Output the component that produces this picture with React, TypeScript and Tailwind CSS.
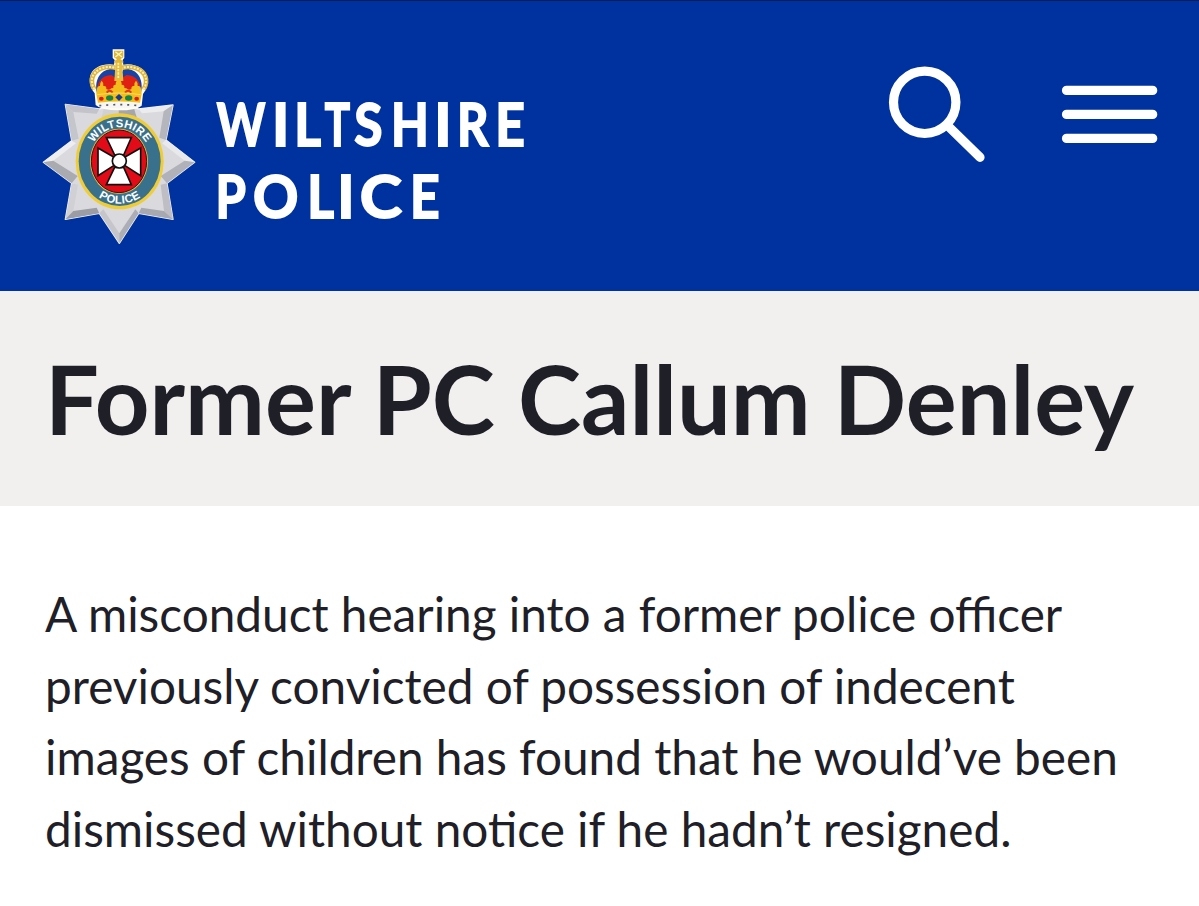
import React from 'react';

type Letter = { char: string; x: number; scale: number };

const wiltshire: Letter[] = [
  { char: 'W', x: 11.8, scale: 0.79 },
  { char: 'I', x: 67, scale: 1 },
  { char: 'L', x: 89.3, scale: 0.88 },
  { char: 'T', x: 119.7, scale: 0.72 },
  { char: 'S', x: 149.3, scale: 0.88 },
  { char: 'H', x: 186, scale: 0.84 },
  { char: 'I', x: 229.2, scale: 1 },
  { char: 'R', x: 252, scale: 0.84 },
  { char: 'E', x: 290.3, scale: 0.88 },
];

const police: Letter[] = [
  { char: 'P', x: 10.6, scale: 0.84 },
  { char: 'O', x: 47.9, scale: 0.96 },
  { char: 'L', x: 102.3, scale: 0.88 },
  { char: 'I', x: 132.2, scale: 1 },
  { char: 'C', x: 154.7, scale: 1.09 },
  { char: 'E', x: 205, scale: 0.88 },
];

const Word = ({ letters, y }: { letters: Letter[]; y: number }) => (
  <>
    {letters.map(({ char, x, scale }, i) => (
      <text key={i} transform={`translate(${x} ${y}) scale(${scale} 1)`}>
        {char}
      </text>
    ))}
  </>
);

const Wordmark = () => (
  <svg
    width="330"
    height="170"
    viewBox="0 -15 330 170"
    className="overflow-visible font-['Lato',sans-serif] text-[58.5px] font-bold"
    fill="#fff"
    stroke="#fff"
    strokeWidth="1.9"
  >
    <Word letters={wiltshire} y={56.4} />
    <Word letters={police} y={128} />
  </svg>
);

const Crest = () => (
  <svg width="165" height="210" viewBox="0 0 495 630">
    <defs>
      <path id="crest-top" d="M157 364 A94 102 0 0 1 345 364" />
      <path id="crest-bottom" d="M133 364 A118 127 0 0 0 369 364" />
    </defs>

    {/* star */}
    <path
      d="M88 193 L190 207 L250 190 L308 207 L411 195 L390 300 L476 367 L393 430 L411 538 L308 520 L250 610 L190 520 L88 538 L107 430 L22 367 L107 302 Z"
      fill="#dadade"
      stroke="#f4f4f6"
      strokeWidth="4"
      strokeLinejoin="round"
    />
    <path d="M88 193 L190 207 L182 221 L112 216 Z" fill="#c3c3c9" />
    <path d="M88 193 L112 216 L128 296 L107 302 Z" fill="#c5c6cc" />
    <path d="M411 195 L308 207 L318 220 L383 214 Z" fill="#ececef" />
    <path d="M411 195 L390 300 L370 293 L383 214 Z" fill="#b5b6bd" />
    <path d="M22 367 L107 302 L120 310 L52 362 Z" fill="#eeeef0" />
    <path d="M22 367 L52 362 L125 408 L107 430 Z" fill="#aaabb1" />
    <path d="M476 367 L390 300 L378 310 L446 362 Z" fill="#e9e9ec" />
    <path d="M476 367 L446 362 L374 408 L393 430 Z" fill="#b1b2b9" />
    <path d="M88 538 L107 430 L126 434 L112 513 Z" fill="#d0d0d5" />
    <path d="M88 538 L112 513 L182 503 L190 520 Z" fill="#9c9da4" />
    <path d="M411 538 L393 430 L374 434 L384 513 Z" fill="#bebec4" />
    <path d="M411 538 L384 513 L316 503 L308 520 Z" fill="#a8a9b0" />
    <path d="M250 610 L190 520 L202 508 L250 580 Z" fill="#c5c5ca" />
    <path d="M250 610 L250 580 L298 508 L308 520 Z" fill="#adaeb5" />
    <path d="M204 205 L248 205 L248 232 L196 232 Z" fill="#d0d1d5" />
    <path d="M248 205 L294 205 L302 232 L248 232 Z" fill="#a5a6ac" />

    {/* garter */}
    <ellipse cx="251" cy="364" rx="132" ry="144" fill="#f0cd35" />
    <ellipse cx="251" cy="364" rx="123" ry="134" fill="#39708c" />
    <ellipse cx="249" cy="364" rx="87" ry="98" fill="#e3be3a" />
    <ellipse cx="249" cy="364" rx="83" ry="94" fill="#e30b17" stroke="#2b1518" strokeWidth="3" />
    <g
      className="font-['Liberation_Sans',sans-serif] text-[34px] font-bold"
      fill="#fff"
      textAnchor="middle"
    >
      <text textLength="190">
        <textPath href="#crest-top" startOffset="50%">
          WILTSHIRE
        </textPath>
      </text>
      <text textLength="134">
        <textPath href="#crest-bottom" startOffset="50%">
          POLICE
        </textPath>
      </text>
    </g>

    {/* cross */}
    <g fill="#fff" stroke="#111" strokeWidth="5" strokeLinejoin="miter">
      <path d="M211 293 H286 L263 345 H236 Z" />
      <path d="M236 382 H263 L286 434 H211 Z" />
      <path d="M186 324 L233 351 V377 L186 407 Z" />
      <path d="M314 324 L267 351 V377 L314 407 Z" />
      <circle cx="250" cy="363" r="21" />
    </g>

    {/* crown */}
    <path
      d="M179 195 L176 160 C152 128 156 88 198 76 Q218 71 234 74 L236 60 L230 54 V28 H265 V54 L260 60 L262 74 Q280 71 300 77 C343 91 343 135 321 162 L317 197 Q300 211 248 211 Q196 211 179 195 Z"
      fill="#fffdf0"
    />
    <path d="M183 160 C172 110 204 82 236 88 L248 120 L262 88 C296 82 326 110 315 160 Z" fill="#1743a6" />
    <path d="M184 160 C180 130 196 106 226 105 L248 120 L272 105 C302 106 318 130 313 160 Z" fill="#df2114" />
    <path
      d="M175 148 C159 120 170 97 194 86 Q214 78 238 83 M323 148 C339 120 328 97 304 86 Q284 78 259 83"
      fill="none"
      stroke="#dcb13c"
      strokeWidth="14"
    />
    <path
      d="M175 148 C159 120 170 97 194 86 Q214 78 238 83 M323 148 C339 120 328 97 304 86 Q284 78 259 83"
      fill="none"
      stroke="#fdf0b4"
      strokeWidth="6"
      strokeDasharray="6 4"
    />
    <path d="M239 65 H258 L262 123 H235 Z" fill="#e5bd44" />
    <path d="M247 67 V117" stroke="#fff5b4" strokeWidth="5" strokeDasharray="7 3" />
    <path d="M234 32 H262 V52 L253 58 L262 64 V68 H234 V64 L243 58 L234 52 Z" fill="#dfb637" />
    <path d="M238 35 L258 51 M258 35 L238 51" stroke="#fff6c0" strokeWidth="4" />
    <path
      d="M181 162 L183 146 Q184 136 192 138 Q190 130 197 122 Q205 130 202 138 Q212 136 211 147 Q220 152 226 145 L232 144 Q230 134 239 134 Q238 124 248 117 Q258 124 257 134 Q267 134 265 144 L271 145 Q278 152 286 147 Q286 136 295 138 Q292 130 300 122 Q308 130 305 138 Q314 136 315 147 L317 162 L312 188 Q248 181 186 188 Z"
      fill="#f3bd1b"
    />
    <path d="M212 158 Q221 146 230 158 M267 158 Q276 146 286 158" fill="none" stroke="#df3a18" strokeWidth="6" />
    <path d="M184 164 Q248 154 314 164" fill="none" stroke="#fbdc62" strokeWidth="3" />
    <ellipse cx="196" cy="176" rx="7" ry="6" fill="#d71a1b" />
    <ellipse cx="221" cy="174" rx="11" ry="8" fill="#168249" />
    <path d="M249 162 L260 172 L249 183 L238 172 Z" fill="#143d91" />
    <ellipse cx="278" cy="174" rx="11" ry="8" fill="#168249" />
    <ellipse cx="302" cy="176" rx="7" ry="6" fill="#d71a1b" />
    <path d="M184 191 Q248 183 314 191 V198 Q248 212 184 198 Z" fill="#f6f6f6" />
    <path d="M190 197 Q248 191 310 197" fill="none" stroke="#55565d" strokeWidth="5" strokeDasharray="6 15" />
  </svg>
);

const SearchIcon = () => (
  <svg width="98" height="98" viewBox="0 0 98 98" fill="none" stroke="#fff" strokeWidth="9.2">
    <circle cx="36.7" cy="36.3" r="31.2" />
    <path d="M59 59 L92 91.3" strokeLinecap="round" />
  </svg>
);

const MenuIcon = () => (
  <svg width="98" height="60" viewBox="0 0 98 60" stroke="#fff" strokeWidth="9.4" strokeLinecap="round">
    <path d="M6.6 6.4 H92.6 M6.6 30.4 H92.6 M6.6 54.4 H92.6" />
  </svg>
);

const Header = () => (
  <header className="flex h-[291px] items-start justify-between border-t border-[#071d54] bg-[#00329f] pr-[41px] pl-9">
    <a className="flex items-start gap-1 pt-[39px]" aria-label="Wiltshire Police">
      <Crest />
      <div className="mt-[35px]">
        <Wordmark />
      </div>
    </a>
    <div className="flex items-start gap-[74px] pt-[65px]">
      <button aria-label="Search">
        <SearchIcon />
      </button>
      <button className="mt-[18px]" aria-label="Menu">
        <MenuIcon />
      </button>
    </div>
  </header>
);

const App = () => {
  return (
    <div className="min-h-screen bg-white font-['Lato',sans-serif] text-[#1f2027]">
      <Header />
      <main>
        <div className="h-[215px] bg-[#f2f0ee] px-[45px] pt-[47px]">
          <h1 className="text-[95.4px] leading-[120px] font-bold whitespace-nowrap">Former PC Callum Denley</h1>
        </div>
        <p className="px-[45px] pt-[72px] text-[47.72px] leading-[71.7px]">
          A misconduct hearing into a former police officer
          <br />
          previously convicted of possession of indecent
          <br />
          images of children has found that he would’ve been
          <br />
          dismissed without notice if he hadn’t resigned.
        </p>
      </main>
    </div>
  );
};

export default App;
